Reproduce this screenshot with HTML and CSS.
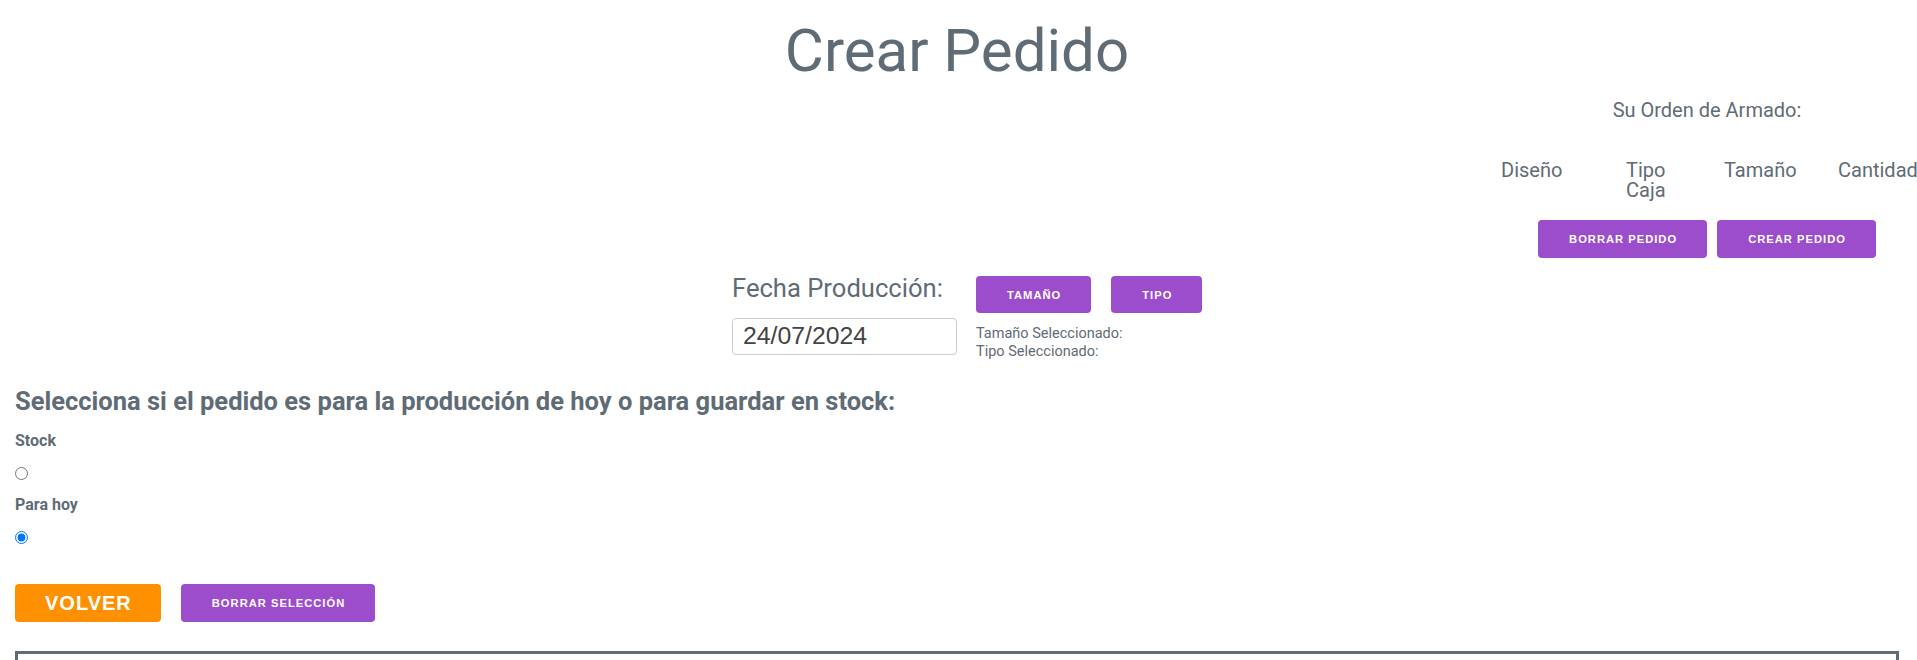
FILE: index.html
```html
<!DOCTYPE html>
<html lang="es">
<head>
<meta charset="utf-8">
<title>Crear Pedido</title>
<link rel="stylesheet" href="styles.css">
</head>
<body>
<div class="page">
  <h1 class="title">Crear Pedido</h1>
  <section class="orden-wrap">
    <div class="orden">
      <p class="orden-label">Su Orden de Armado:</p>
      <table class="orden-table">
        <thead>
          <tr>
            <th class="c1">Diseño</th>
            <th class="c2"><span class="narrow">Tipo Caja</span></th>
            <th class="c3">Tamaño</th>
            <th class="c4">Cantidad</th>
          </tr>
        </thead>
      </table>
      <div class="orden-actions">
        <button class="btn btn-purple btn-borrar">BORRAR PEDIDO</button>
        <button class="btn btn-purple btn-crear">CREAR PEDIDO</button>
      </div>
    </div>
  </section>
  <section class="produccion">
    <div class="fecha">
      <label class="fecha-label" for="fecha">Fecha Producción:</label>
      <input id="fecha" class="fecha-input" type="text" value="24/07/2024">
    </div>
    <div class="seleccion">
      <div class="seleccion-btns">
        <button class="btn btn-purple btn-sm">TAMAÑO</button>
        <button class="btn btn-purple btn-sm">TIPO</button>
      </div>
      <p class="sel-text sel-first">Tamaño Seleccionado:</p>
      <p class="sel-text">Tipo Seleccionado:</p>
    </div>
  </section>
  <h2 class="pregunta">Selecciona si el pedido es para la producción de hoy o para guardar en stock:</h2>
  <div class="opciones">
    <label class="opcion-label" for="stock">Stock</label>
    <input type="radio" id="stock" name="destino" class="opcion-radio">
    <label class="opcion-label" for="hoy">Para hoy</label>
    <input type="radio" id="hoy" name="destino" class="opcion-radio" checked>
  </div>
  <div class="acciones">
    <button class="btn btn-orange">VOLVER</button>
    <button class="btn btn-purple btn-limpiar">BORRAR SELECCIÓN</button>
  </div>
  <div class="grid-box"></div>
</div>
</body>
</html>
```

FILE: styles.css
```css
html, body {
  margin: 0;
  padding: 0;
  overflow: hidden;
  background: #ffffff;
}

body {
  font-family: Roboto, "Noto Sans", sans-serif;
  color: #5f6b75;
}

.page {
  padding: 0 18px 0 15px;
}

.title {
  margin: 15px 0 0;
  font-size: 60px;
  font-weight: 400;
  line-height: 72px;
  text-align: center;
}

.orden-wrap {
  display: flex;
  justify-content: flex-end;
  margin: 11px -18px 0 0;
}

.orden {
  width: 420px;
  text-align: center;
}

.orden-label {
  margin: 0;
  font-size: 20px;
  line-height: 24px;
}

.orden-table {
  margin-top: 38px;
  border-collapse: collapse;
  table-layout: fixed;
  width: 457px;
}

.orden-table th {
  box-sizing: border-box;
  padding: 0 0 0 4px;
  font-size: 20px;
  font-weight: 400;
  line-height: 20px;
  text-align: left;
  vertical-align: top;
}

.c1 { width: 125px; }
.c2 { width: 98px; }
.c3 { width: 114px; }
.c4 { width: 120px; }

.narrow {
  display: inline-block;
  width: min-content;
}

.orden-actions {
  display: flex;
  justify-content: center;
  gap: 10px;
  margin-top: 20px;
}

.btn {
  font-family: "Liberation Sans", Arial, sans-serif;
  font-weight: 700;
  font-size: 11.2px;
  letter-spacing: 1px;
  color: #ffffff;
  border: 0;
  border-radius: 4px;
  height: 38px;
  padding: 0 30px 0 31px;
  cursor: pointer;
}

.btn-purple {
  background: #9c4dcc;
}

.btn-limpiar {
  padding: 0 30px 0 31px;
}

.btn-orange {
  background: #ff9100;
  font-size: 20px;
  padding: 0 29px 0 30px;
}

.produccion {
  display: flex;
  justify-content: center;
  align-items: flex-start;
  gap: 19px;
  margin-top: 15px;
  padding-left: 21px;
}

.fecha {
  width: 225px;
  display: flex;
  flex-direction: column;
}

.fecha-label {
  font-size: 25.6px;
  line-height: 30.7px;
}

.fecha-input {
  box-sizing: border-box;
  width: 225px;
  height: 37px;
  margin-top: 14px;
  padding: 0 10px;
  border: 1px solid #cccccc;
  border-radius: 4px;
  font-family: "Liberation Sans", Arial, sans-serif;
  font-size: 24.8px;
  color: #444444;
}

.seleccion {
  width: 227px;
  margin-top: 3px;
}

.seleccion-btns {
  display: flex;
  gap: 20px;
}

.btn-sm {
  height: 37px;
}

.sel-text {
  margin: 0;
  font-size: 14.5px;
  line-height: 18px;
}

.sel-first {
  margin-top: 12px;
}

.pregunta {
  margin: 25.5px 0 0;
  font-size: 25.5px;
  font-weight: 700;
  line-height: 28.8px;
}

.opciones {
  margin-top: 14px;
}

.opcion-label {
  display: block;
  font-size: 16px;
  font-weight: 700;
  line-height: 24px;
}

.opcion-radio {
  display: block;
  width: 13px;
  height: 13px;
  margin: 14px 0 13px;
}

.acciones {
  display: flex;
  gap: 20px;
  margin-top: 40px;
}

.grid-box {
  margin-top: 29px;
  height: 400px;
  border: 3px solid #5f6b75;
}
```
